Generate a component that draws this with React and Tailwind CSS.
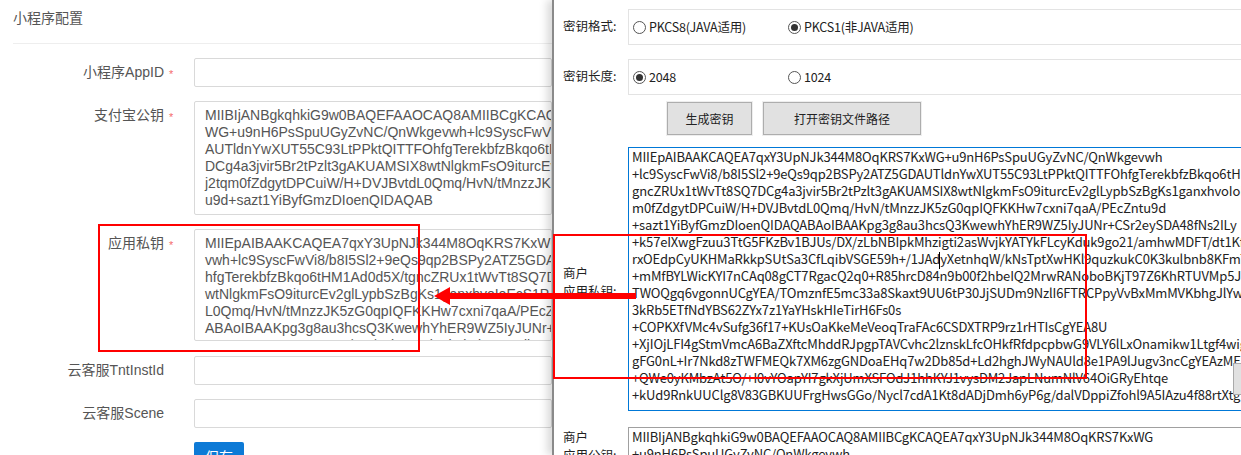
import React from 'react'

const rightLines = [
  'MIIEpAIBAAKCAQEA7qxY3UpNJk344M8OqKRS7KxWG+u9nH6PsSpuUGyZvNC/QnWkgevwh',
  '+lc9SyscFwVi8/b8I5Sl2+9eQs9qp2BSPy2ATZ5GDAUTldnYwXUT55C93LtPPktQITTFOhfgTerekbfzBkqo6tHM1Ad0d5X/t',
  'gncZRUx1tWvTt8SQ7DCg4a3jvir5Br2tPzlt3gAKUAMSIX8wtNlgkmFsO9iturcEv2glLypbSzBgKs1ganxhvoIoEcS1P',
  'm0fZdgytDPCuiW/H+DVJBvtdL0Qmq/HvN/tMnzzJK5zG0qpIQFKKHw7cxni7qaA/PEcZntu9d',
  '+sazt1YiByfGmzDIoenQIDAQABAoIBAAKpg3g8au3hcsQ3KwewhYhER9WZ5IyJUNr+CSr2eySDA48fNs2ILy',
  '+k57eIXwgFzuu3TtG5FKzBv1BJUs/DX/zLbNBIpkMhzigti2asWvjkYATYkFLcyKduk9go21/amhwMDFT/dt1Kfl',
  'rxOEdpCyUKHMaRkkpSUtSa3CfLqibVSGE59h+/1JAdyXetnhqW/kNsTptXwHKl9quzkukC0K3kulbnb8KFmTU',
  '+mMfBYLWicKYI7nCAq08gCT7RgacQ2q0+R85hrcD84n9b00f2hbeIQ2MrwRANoboBKjT97Z6KhRTUVMp5J',
  'TWOQgq6vgonnUCgYEA/TOmznfE5mc33a8Skaxt9UU6tP30JjSUDm9NzlI6FTRCPpyVvBxMmMVKbhgJlYwe',
  '3kRb5ETfNdYBS62ZYx7z1YaYHskHIeTirH6Fs0s',
  '+COPKXfVMc4vSufg36f17+KUsOaKkeMeVeoqTraFAc6CSDXTRP9rz1rHTIsCgYEA8U',
  '+XjIOjLFI4gStmVmcA6BaZXftcMhddRJpgpTAVCvhc2lznskLfcOHkfRfdpcpbwG9VLY6lLxOnamikw1Ltgf4wig4',
  'gFG0nL+Ir7Nkd8zTWFMEQk7XM6zgGNDoaEHq7w2Db85d+Ld2hghJWyNAUld8e1PA9lJugv3ncCgYEAzMF',
  '+QWe0yKMbzAt5O/+I0vYOapYI7gkXjUmXSFOdJ1hhKYJ1vysDM2JapLNumNlV64OiGRyEhtqe',
  '+kUd9RnkUUClg8V83GBKUUFrgHwsGGo/Nycl7cdA1Kt8dADjDmh6yP6g/dalVDppiZfohl9A5IAzu4f88rtXtg',
]

const pubKey = [
  'MIIBIjANBgkqhkiG9w0BAQEFAAOCAQ8AMIIBCgKCAQEA7qxY3UpNJk344M8O',
  'WG+u9nH6PsSpuUGyZvNC/QnWkgevwh+lc9SyscFwVi8',
  'AUTldnYwXUT55C93LtPPktQITTFOhfgTerekbfzBkqo6tHM',
  'DCg4a3jvir5Br2tPzlt3gAKUAMSIX8wtNlgkmFsO9iturcEv2',
  'j2tqm0fZdgytDPCuiW/H+DVJBvtdL0Qmq/HvN/tMnzzJK5z',
  'u9d+sazt1YiByfGmzDIoenQIDAQAB',
]

const privKey = [
  'MIIEpAIBAAKCAQEA7qxY3UpNJk344M8OqKRS7KxWG+u9nH',
  'vwh+lc9SyscFwVi8/b8I5Sl2+9eQs9qp2BSPy2ATZ5GDAUT',
  'hfgTerekbfzBkqo6tHM1Ad0d5X/tgncZRUx1tWvTt8SQ7DCg',
  'wtNlgkmFsO9iturcEv2glLypbSzBgKs1ganxhvoIoEcS1P',
  'L0Qmq/HvN/tMnzzJK5zG0qpIQFKKHw7cxni7qaA/PEcZntu9d',
  'ABAoIBAAKpg3g8au3hcsQ3KwewhYhER9WZ5IyJUNr+CSr2ey',
  'zuu3TtG5FKzBv1BJUs/DX/zLbNBIpkMhzigti2asWvjkYATY',
]

function Label({ children, required, className = '' }) {
  return (
    <div className={`w-[194px] shrink-0 pr-[30px] text-right text-[14px] leading-[20px] text-[#555] ${className}`}>
      {children}
      {required && <span className="absolute ml-[5px] mt-[2px] text-[11px] text-[#f56c6c]">*</span>}
    </div>
  )
}

function FormInput({ label, required }) {
  return (
    <div className="flex items-start">
      <Label required={required} className="pt-[4px]">{label}</Label>
      <div className="h-[29px] flex-1 rounded-[2px] border border-[#d9d9d9] bg-white" />
    </div>
  )
}

function KeyBox({ label, lines, height }) {
  return (
    <div className="flex items-start">
      <Label required className="pt-[4px]">{label}</Label>
      <div className={`flex-1 overflow-hidden whitespace-nowrap rounded-[2px] border border-[#d9d9d9] bg-white pl-[10px] pt-[5px] text-[14px] leading-[17px] text-[#555] ${height}`}>
        {lines.map(l => <div key={l}>{l}</div>)}
      </div>
    </div>
  )
}

function Radio({ checked, label, className = '' }) {
  return (
    <div className={`flex items-center gap-[3px] ${className}`}>
      <span className="flex h-[13px] w-[13px] items-center justify-center rounded-full border border-[#555] bg-white">
        {checked && <span className="h-[7px] w-[7px] rounded-full bg-[#333]" />}
      </span>
      <span className="text-[12.5px] tracking-[-0.2px]">{label}</span>
    </div>
  )
}

function OptionRow({ label, options }) {
  return (
    <div className="flex items-start">
      <div className="w-[74px] shrink-0 pl-[9px] pt-[7px] text-[12.5px] leading-[20px]">{label}</div>
      <div className="flex h-[36px] flex-1 items-center border border-r-0 border-[#e3e3e3] pl-[4px] pt-[1px]">
        {options.map(o => <Radio key={o.label} {...o} />)}
      </div>
    </div>
  )
}

function RedBox({ className }) {
  return <div className={`pointer-events-none absolute border-[2px] border-[#f00] ${className}`} />
}

export default function App() {
  return (
    <div className="relative flex h-[455px] w-[1241px] overflow-hidden bg-white font-['Liberation_Sans','Noto_Sans_CJK_SC',sans-serif]">
      {/* Background page: the config form */}
      <div className="w-[552px] shrink-0 overflow-hidden pl-[13px]">
        <div className="h-[44px] border-b border-[#eee] pt-[8px] text-[14px] leading-[20px] text-[#555]">小程序配置</div>
        <div className="-ml-[13px] flex flex-col pt-[14px]">
          <FormInput label="小程序AppID" required />
          <div className="mt-[14px]">
            <KeyBox label="支付宝公钥" lines={pubKey} height="h-[114px]" />
          </div>
          <div className="mt-[14px]">
            <KeyBox label="应用私钥" lines={privKey} height="h-[112px]" />
          </div>
          <div className="mt-[15px]"><FormInput label="云客服TntInstId" /></div>
          <div className="mt-[14px]"><FormInput label="云客服Scene" /></div>
          <div className="mt-[14px] pl-[194px]">
            <div className="flex h-[30px] w-[50px] items-center justify-center rounded-[2px] bg-[#0d7ad6] text-[14px] text-white">保存</div>
          </div>
        </div>
      </div>

      {/* Key tool window on top */}
      <div className="z-10 flex-1 overflow-hidden border-l-2 border-[#8a8a8a] bg-white pt-[9px] font-['Noto_Sans_CJK_SC','Noto_Sans',sans-serif] text-[13px] text-[#222] shadow-[-5px_0_8px_rgba(0,0,0,0.15)]">
        <OptionRow
          label="密钥格式:"
          options={[
            { label: 'PKCS8(JAVA适用)', className: 'w-[155px]' },
            { label: 'PKCS1(非JAVA适用)', checked: true },
          ]}
        />
        <div className="mt-[14px]">
          <OptionRow
            label="密钥长度:"
            options={[
              { label: '2048', checked: true, className: 'w-[155px]' },
              { label: '1024' },
            ]}
          />
        </div>
        <div className="mt-[7px] flex gap-[11px] pl-[113px] text-[12px]">
          <div className="flex h-[33px] w-[85px] items-center justify-center border border-[#adadad] bg-[#e1e1e1] outline outline-1 outline-[#eee]">生成密钥</div>
          <div className="flex h-[33px] w-[158px] items-center justify-center border border-[#adadad] bg-[#e1e1e1] outline outline-1 outline-[#eee]">打开密钥文件路径</div>
        </div>
        <div className="mt-[12px] flex items-start">
          <div className="w-[74px] shrink-0 pl-[9px] pt-[117px] text-[12.5px] leading-[18px]">商户<br />应用私钥:</div>
          <div className="relative h-[264px] flex-1 overflow-hidden whitespace-nowrap border border-r-0 border-[#0078d7] pl-[3px] leading-[17px] tracking-[-0.16px]">
            {rightLines.map(l => <div key={l}>{l}</div>)}
            <span className="absolute left-[310px] top-[104px] h-[17px] w-px bg-black" />
          </div>
        </div>
        <div className="mt-[16px] flex items-start">
          <div className="w-[74px] shrink-0 pl-[9px] pt-[1px] text-[12.5px] leading-[18px]">商户<br />应用公钥:</div>
          <div className="h-[40px] flex-1 overflow-hidden whitespace-nowrap border border-r-0 border-[#a0a0a0] pl-[3px] leading-[17px] tracking-[-0.16px]">
            <div>MIIBIjANBgkqhkiG9w0BAQEFAAOCAQ8AMIIBCgKCAQEA7qxY3UpNJk344M8OqKRS7KxWG</div>
            <div>+u9nH6PsSpuUGyZvNC/QnWkgevwh</div>
          </div>
        </div>
      </div>

      {/* Annotations */}
      <RedBox className="left-[98px] top-[224px] z-20 h-[128px] w-[322px]" />
      <RedBox className="left-[553px] top-[234px] z-20 h-[145px] w-[534px]" />
      <svg className="absolute left-[430px] top-[280px] z-20" width="210" height="32" viewBox="0 0 210 32">
        <path d="M4 16 L20 7 L20 13 L206 13 L206 19 L20 19 L20 25 Z" fill="#f00" />
      </svg>
      <div className="absolute left-[1233px] top-[363px] z-20 h-[32px] w-[8px] border border-r-0 border-[#aaa] bg-[#e1e1e1]" />
    </div>
  )
}
